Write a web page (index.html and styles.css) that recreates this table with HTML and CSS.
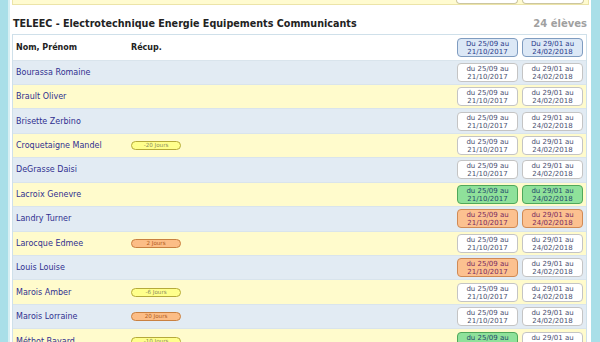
FILE: index.html
```html
<!DOCTYPE html>
<html lang="fr">
<head>
<meta charset="utf-8">
<title>TELEEC</title>
<link rel="stylesheet" href="styles.css">
</head>
<body>
<div class="page">
  <div class="prev">
    <span class="pbtn"></span><span class="pbtn"></span>
  </div>
  <div class="title">
    <h2>TELEEC - Electrotechnique Energie Equipements Communicants</h2>
    <span class="count">24 élèves</span>
  </div>
  <div class="table">
    <div class="row head">
      <div class="name">Nom, Prénom</div>
      <div class="recup">Récup.</div>
      <div class="btn hb">Du 25/09 au<br>21/10/2017</div>
      <div class="btn hb">Du 29/01 au<br>24/02/2018</div>
    </div>
    <div class="row b">
      <div class="name">Bourassa Romaine</div><div class="recup"></div>
      <div class="btn">du 25/09 au<br>21/10/2017</div><div class="btn">du 29/01 au<br>24/02/2018</div>
    </div>
    <div class="row y">
      <div class="name">Brault Oliver</div><div class="recup"></div>
      <div class="btn">du 25/09 au<br>21/10/2017</div><div class="btn">du 29/01 au<br>24/02/2018</div>
    </div>
    <div class="row b">
      <div class="name">Brisette Zerbino</div><div class="recup"></div>
      <div class="btn">du 25/09 au<br>21/10/2017</div><div class="btn">du 29/01 au<br>24/02/2018</div>
    </div>
    <div class="row y">
      <div class="name">Croquetaigne Mandel</div><div class="recup"><span class="badge by">-20 Jours</span></div>
      <div class="btn">du 25/09 au<br>21/10/2017</div><div class="btn">du 29/01 au<br>24/02/2018</div>
    </div>
    <div class="row b">
      <div class="name">DeGrasse Daisi</div><div class="recup"></div>
      <div class="btn">du 25/09 au<br>21/10/2017</div><div class="btn">du 29/01 au<br>24/02/2018</div>
    </div>
    <div class="row y">
      <div class="name">Lacroix Genevre</div><div class="recup"></div>
      <div class="btn green">du 25/09 au<br>21/10/2017</div><div class="btn green">du 29/01 au<br>24/02/2018</div>
    </div>
    <div class="row b">
      <div class="name">Landry Turner</div><div class="recup"></div>
      <div class="btn orange">du 25/09 au<br>21/10/2017</div><div class="btn orange">du 29/01 au<br>24/02/2018</div>
    </div>
    <div class="row y">
      <div class="name">Larocque Edmee</div><div class="recup"><span class="badge bo">2 Jours</span></div>
      <div class="btn">du 25/09 au<br>21/10/2017</div><div class="btn">du 29/01 au<br>24/02/2018</div>
    </div>
    <div class="row b">
      <div class="name">Louis Louise</div><div class="recup"></div>
      <div class="btn orange">du 25/09 au<br>21/10/2017</div><div class="btn">du 29/01 au<br>24/02/2018</div>
    </div>
    <div class="row y">
      <div class="name">Marois Amber</div><div class="recup"><span class="badge by">-6 Jours</span></div>
      <div class="btn">du 25/09 au<br>21/10/2017</div><div class="btn">du 29/01 au<br>24/02/2018</div>
    </div>
    <div class="row b">
      <div class="name">Marois Lorraine</div><div class="recup"><span class="badge bo">20 Jours</span></div>
      <div class="btn">du 25/09 au<br>21/10/2017</div><div class="btn">du 29/01 au<br>24/02/2018</div>
    </div>
    <div class="row y">
      <div class="name">Méthot Bayard</div><div class="recup"><span class="badge by">-10 Jours</span></div>
      <div class="btn green">du 25/09 au<br>21/10/2017</div><div class="btn">du 29/01 au<br>24/02/2018</div>
    </div>
  </div>
</div>
</body>
</html>
```
FILE: styles.css
```css
html, body {
  margin: 0;
  padding: 0;
}
body {
  background: #a9dfe8;
  font-family: "DejaVu Sans", Verdana, sans-serif;
  height: 342px;
  overflow: hidden;
}
.page {
  margin: 0 9px 0 8px;
  border-left: 2px solid #d6eff3;
  background: #ffffff;
  padding: 0 2px 0 2px;
  height: 342px;
  box-sizing: border-box;
}
.prev {
  height: 5px;
  background: #fffbd0;
  border: 1px solid #ece4a8;
  border-top: none;
  display: flex;
  justify-content: flex-end;
  gap: 4px;
  padding-right: 4px;
  box-sizing: border-box;
}
.pbtn {
  width: 60px;
  height: 3px;
  background: #fff;
  border: 1px solid #ccc6a0;
  border-top: none;
  border-radius: 0 0 4px 4px;
}
.title {
  display: flex;
  justify-content: space-between;
  align-items: baseline;
  padding: 13px 2px 0 1px;
  height: 16px;
}
.title h2 {
  margin: 0;
  font-size: 9.6px;
  font-weight: bold;
  color: #222;
}
.count {
  font-size: 10px;
  font-weight: bold;
  color: #a0a0a0;
}
.table {
  border: 1px solid #cfe0ea;
  border-bottom: none;
  margin-right: 2px;
}
.row {
  display: grid;
  grid-template-columns: 111px 1fr 61px 61px;
  column-gap: 4px;
  align-items: center;
  height: 24.45px;
  padding: 0 3px 0 3px;
  border-top: 1px solid #d9e4ec;
  box-sizing: border-box;
}
.row.head {
  border-top: none;
  background: #ffffff;
  height: 24.5px;
}
.row.b { background: #e2ebf3; }
.row.y { background: #fffbcc; }
.name {
  font-size: 8px;
  color: #303090;
  white-space: nowrap;
}
.recup {
  display: flex;
  align-items: center;
}
.head .name, .head .recup {
  font-weight: bold;
  color: #222;
  font-size: 8px;
}
.btn {
  height: 19px;
  box-sizing: border-box;
  border: 1px solid #c4c4c4;
  border-radius: 4px;
  background: #ffffff;
  color: #4a5070;
  font-size: 7px;
  line-height: 8px;
  text-align: center;
  padding-top: 1px;
  white-space: nowrap;
}
.btn.hb {
  background: #dce8f6;
  border-color: #7f9cc0;
  color: #2a3a8a;
}
.btn.green {
  background: #8fe19a;
  border-color: #4fa85a;
  color: #1f4a6a;
}
.btn.orange {
  background: #fcc190;
  border-color: #d08a55;
  color: #7a2a60;
}
.badge {
  display: block;
  width: 50px;
  height: 9px;
  box-sizing: border-box;
  border-radius: 5px;
  font-size: 5.6px;
  line-height: 7px;
  text-align: center;
}
.badge.by {
  background: #ffff8c;
  border: 1px solid #b5aa3a;
  color: #8a8a60;
}
.badge.bo {
  background: #fcbd86;
  border: 1px solid #c98040;
  color: #b05a20;
}
```
